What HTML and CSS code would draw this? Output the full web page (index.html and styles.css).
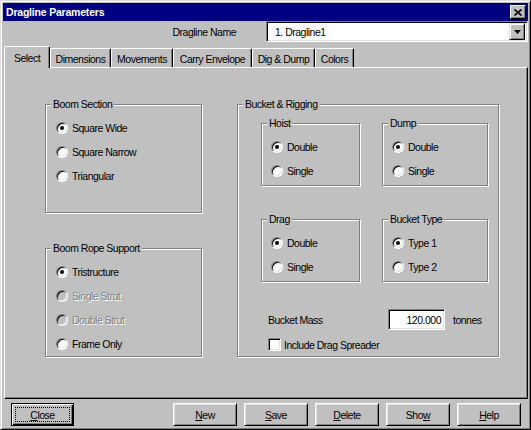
FILE: index.html
```html
<!DOCTYPE html>
<html>
<head>
<meta charset="utf-8">
<link rel="stylesheet" href="styles.css">
</head>
<body>
<div class="window">
  <div class="titlebar">
    <span class="title">Dragline Parameters</span>
    <span class="xbtn"><svg width="8" height="7" viewBox="0 0 8 7"><path d="M0.5 0.5 L7.5 6.5 M7.5 0.5 L0.5 6.5" stroke="#000" stroke-width="1.6" fill="none"/></svg></span>
  </div>
  <div class="namerow">
    <span class="namelabel">Dragline Name</span>
    <div class="combo">
      <span class="combo-text">1. Dragline1</span>
      <span class="combo-btn"><svg width="7" height="4" viewBox="0 0 7 4"><path d="M0 0 H7 L3.5 4 Z" fill="#000"/></svg></span>
    </div>
  </div>
  <div class="tabs">
    <div class="tab active w-select">Select</div>
    <div class="tab w-dim">Dimensions</div>
    <div class="tab w-mov">Movements</div>
    <div class="tab w-carry">Carry Envelope</div>
    <div class="tab w-dig">Dig &amp; Dump</div>
    <div class="tab w-col">Colors</div>
  </div>
  <div class="panel">
    <div class="col-left">
      <fieldset class="grp g-section">
        <legend>Boom Section</legend>
        <div class="opts">
          <div class="row"><span class="radio on"></span><span class="lbl">Square Wide</span></div>
          <div class="row"><span class="radio"></span><span class="lbl">Square Narrow</span></div>
          <div class="row"><span class="radio"></span><span class="lbl">Triangular</span></div>
        </div>
      </fieldset>
      <fieldset class="grp g-rope">
        <legend>Boom Rope Support</legend>
        <div class="opts">
          <div class="row"><span class="radio on"></span><span class="lbl">Tristructure</span></div>
          <div class="row"><span class="radio dis"></span><span class="lbl dis-text">Single Strut</span></div>
          <div class="row"><span class="radio dis"></span><span class="lbl dis-text">Double Strut</span></div>
          <div class="row"><span class="radio"></span><span class="lbl">Frame Only</span></div>
        </div>
      </fieldset>
    </div>
    <fieldset class="grp g-bucket">
      <legend>Bucket &amp; Rigging</legend>
      <div class="br-body">
        <div class="subgrid">
          <fieldset class="grp sub">
            <legend>Hoist</legend>
            <div class="opts">
              <div class="row"><span class="radio on"></span><span class="lbl">Double</span></div>
              <div class="row"><span class="radio"></span><span class="lbl">Single</span></div>
            </div>
          </fieldset>
          <fieldset class="grp sub">
            <legend>Dump</legend>
            <div class="opts">
              <div class="row"><span class="radio on"></span><span class="lbl">Double</span></div>
              <div class="row"><span class="radio"></span><span class="lbl">Single</span></div>
            </div>
          </fieldset>
          <fieldset class="grp sub">
            <legend>Drag</legend>
            <div class="opts">
              <div class="row"><span class="radio on"></span><span class="lbl">Double</span></div>
              <div class="row"><span class="radio"></span><span class="lbl">Single</span></div>
            </div>
          </fieldset>
          <fieldset class="grp sub">
            <legend>Bucket Type</legend>
            <div class="opts">
              <div class="row"><span class="radio on"></span><span class="lbl">Type 1</span></div>
              <div class="row"><span class="radio"></span><span class="lbl">Type 2</span></div>
            </div>
          </fieldset>
        </div>
        <div class="massrow">
          <span class="masslabel">Bucket Mass</span>
          <span class="numbox">120.000</span>
          <span class="unit">tonnes</span>
        </div>
        <div class="checkrow">
          <span class="check"></span>
          <span class="lbl">Include Drag Spreader</span>
        </div>
      </div>
    </fieldset>
  </div>
  <div class="buttons">
    <div class="btn default"><span class="focus"><u>C</u>lose</span></div>
    <div class="btn push"><u>N</u>ew</div>
    <div class="btn"><u>S</u>ave</div>
    <div class="btn"><u>D</u>elete</div>
    <div class="btn">Sho<u>w</u></div>
    <div class="btn"><u>H</u>elp</div>
  </div>
</div>
</body>
</html>
```
FILE: styles.css
```css
* { box-sizing: border-box; }
html, body { margin: 0; padding: 0; background: #c0c0c0; }
body {
  font-family: "Liberation Sans", Arial, sans-serif;
  font-size: 10.5px;
  letter-spacing: -0.5px;
  color: #000;
}
.window {
  width: 531px;
  height: 430px;
  border: 1px solid;
  border-color: #dfdfdf #000 #000 #dfdfdf;
  box-shadow: inset 1px 1px #fff, inset -1px -1px #808080;
  padding: 2px;
  display: flex;
  flex-direction: column;
  background: #c0c0c0;
}
.titlebar {
  height: 18px;
  flex: none;
  background: #000080;
  color: #fff;
  font-weight: bold;
  letter-spacing: -0.2px;
  display: flex;
  align-items: center;
  justify-content: space-between;
  padding: 0 2px 0 3px;
}
.xbtn {
  width: 16px;
  height: 14px;
  background: #c0c0c0;
  border: 1px solid;
  border-color: #fff #000 #000 #fff;
  box-shadow: inset -1px -1px #808080;
  display: flex;
  align-items: center;
  justify-content: center;
}
.xbtn svg { display: block; }
.namerow {
  height: 21px;
  flex: none;
  display: flex;
  align-items: center;
  justify-content: flex-end;
}
.namelabel { margin-right: 30px; }
.combo {
  width: 262px;
  height: 21px;
  background: #fff;
  border: 1px solid;
  border-color: #808080 #fff #fff #808080;
  box-shadow: inset 1px 1px #000, inset -1px -1px #dfdfdf;
  padding: 2px;
  display: flex;
  align-items: center;
}
.combo-text { flex: 1; padding-left: 6px; }
.combo-btn {
  width: 16px;
  height: 17px;
  background: #c0c0c0;
  border: 1px solid;
  border-color: #dfdfdf #000 #000 #dfdfdf;
  box-shadow: inset 1px 1px #fff, inset -1px -1px #808080;
  display: flex;
  align-items: center;
  justify-content: center;
}
.combo-btn svg { display: block; }
.tabs {
  margin-top: 4px;
  height: 21px;
  flex: none;
  display: flex;
  align-items: flex-end;
  padding-left: 1px;
}
.tab {
  height: 19px;
  border-top: 1px solid #fff;
  border-left: 1px solid #fff;
  border-right: 1px solid #000;
  border-radius: 2px 2px 0 0;
  box-shadow: inset -1px 0 #808080;
  display: flex;
  align-items: center;
  justify-content: center;
  padding-top: 2px;
  background: #c0c0c0;
}
.tab.active {
  height: 22px;
  margin-bottom: -1px;
  position: relative;
  z-index: 1;
  padding-top: 1px;
}
.w-select { width: 46px; }
.w-dim { width: 61px; }
.w-mov { width: 62px; }
.w-carry { width: 79px; }
.w-dig { width: 63px; }
.w-col { width: 39px; }
.panel {
  margin-left: 1px;
  width: 524px;
  height: 332px;
  flex: none;
  border: 1px solid;
  border-color: #fff #000 #000 #fff;
  box-shadow: inset -1px -1px #808080;
  padding: 30px 0 0 40px;
  display: flex;
  align-items: flex-start;
  gap: 35px;
}
.col-left {
  width: 157px;
  display: flex;
  flex-direction: column;
}
.grp {
  margin: 0;
  padding: 0;
  min-width: 0;
  border: 1px solid #808080;
  box-shadow: inset 1px 1px #fff, 1px 1px #fff;
}
.grp > legend {
  padding: 0 2px;
  margin-left: 5px;
  line-height: 13px;
  background: #c0c0c0;
}
.g-section { height: 115px; }
.g-rope { height: 115px; margin-top: 29px; }
.g-bucket { width: 262px; height: 259px; }
.opts { padding: 5px 0 0 10px; }
.row {
  height: 24px;
  display: flex;
  align-items: center;
}
.radio {
  width: 12px;
  height: 12px;
  flex: none;
  border-radius: 50%;
  border: 1px solid;
  border-color: #808080 #fff #fff #808080;
  box-shadow: inset 1px 1px #000, inset -1px -1px #dfdfdf;
  background: #fff;
  position: relative;
}
.radio.on::after {
  content: "";
  position: absolute;
  left: 3px;
  top: 3px;
  width: 4px;
  height: 4px;
  border-radius: 50%;
  background: #000;
}
.radio.dis { background: #c0c0c0; }
.lbl { margin-left: 4px; }
.dis-text { color: #808080; text-shadow: 1px 1px #fff; }
.br-body { padding: 6px 0 0 23px; }
.subgrid {
  display: grid;
  grid-template-columns: 99px 106px;
  column-gap: 22px;
  row-gap: 27px;
}
.sub { height: 69px; }
.sub .opts { padding-left: 9px; }
.massrow {
  margin-top: 27px;
  height: 21px;
  display: flex;
  align-items: center;
  padding-left: 7px;
}
.masslabel { width: 120px; }
.numbox {
  width: 57px;
  height: 21px;
  background: #fff;
  border: 1px solid;
  border-color: #808080 #fff #fff #808080;
  box-shadow: inset 1px 1px #000, inset -1px -1px #dfdfdf;
  display: flex;
  align-items: center;
  justify-content: flex-end;
  padding-right: 3px;
}
.unit { margin-left: 8px; }
.checkrow {
  margin-top: 8px;
  height: 13px;
  display: flex;
  align-items: center;
  padding-left: 7px;
}
.check {
  width: 13px;
  height: 13px;
  flex: none;
  border: 1px solid;
  border-color: #808080 #fff #fff #808080;
  box-shadow: inset 1px 1px #000, inset -1px -1px #dfdfdf;
  background: #fff;
}
.checkrow .lbl { margin-left: 3px; }
.buttons {
  margin-top: 4px;
  flex: none;
  display: flex;
  gap: 7px;
  padding: 0 7px 0 8px;
}
.btn {
  width: 64px;
  height: 23px;
  border: 1px solid;
  border-color: #fff #000 #000 #fff;
  box-shadow: inset 1px 1px #dfdfdf, inset -1px -1px #808080;
  display: flex;
  align-items: center;
  justify-content: center;
}
.btn.push { margin-left: auto; }
.btn.default {
  width: 63px;
  border-color: #000;
  box-shadow: inset 1px 1px #fff, inset -1px -1px #000, inset -2px -2px #808080;
  padding: 3px;
}
.focus {
  flex: 1;
  align-self: stretch;
  border: 1px dotted #000;
  display: flex;
  align-items: center;
  justify-content: center;
}
```
